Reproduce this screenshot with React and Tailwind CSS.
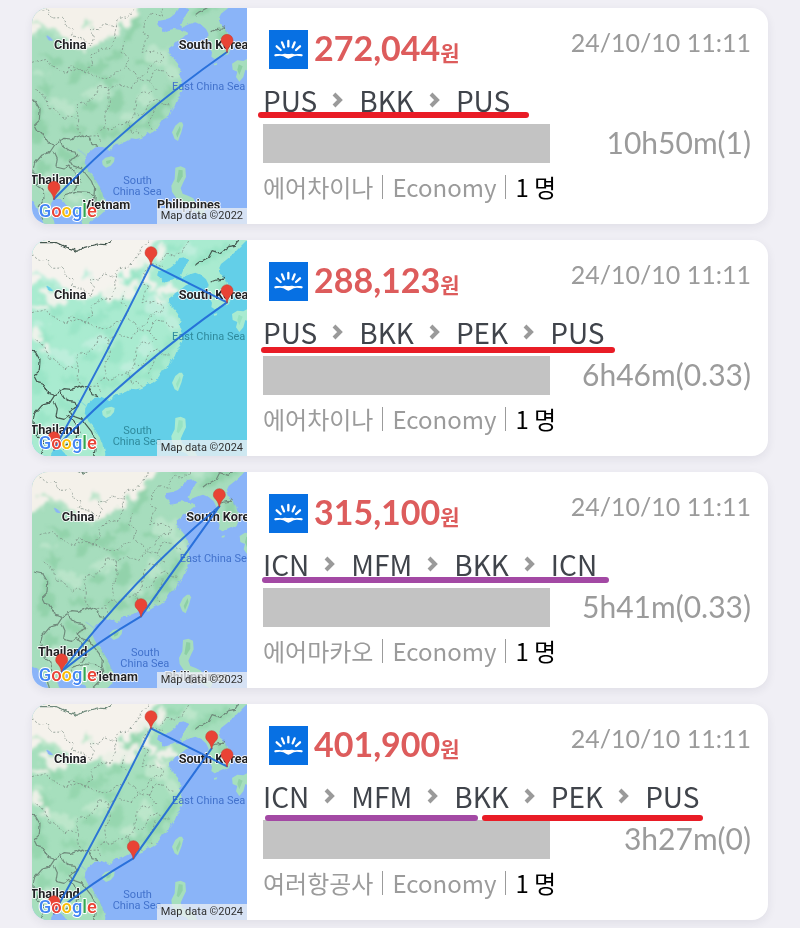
import React from 'react';

const FLIGHTS = [
  {
    price: '272,044',
    date: '24/10/10 11:11',
    route: ['PUS', 'BKK', 'PUS'],
    duration: '10h50m(1)',
    airline: '에어차이나',
    lines: ['left-[11px] top-[104px] w-[271px] bg-[#e91c26]'],
    map: { theme: 'classic', year: 2022, dx: 0, dy: -55, pins: ['BKK', 'PUS'], legs: ['BKK-PUS'], extra: true },
  },
  {
    price: '288,123',
    date: '24/10/10 11:11',
    route: ['PUS', 'BKK', 'PEK', 'PUS'],
    duration: '6h46m(0.33)',
    airline: '에어차이나',
    lines: ['left-[14px] top-[107px] w-[354px] bg-[#e91c26]'],
    map: { theme: 'bright', year: 2024, dx: 0, dy: 0, pins: ['BKK', 'PEK', 'PUS'], legs: ['BKK-PUS', 'BKK-PEK', 'PEK-PUS'] },
  },
  {
    price: '315,100',
    date: '24/10/10 11:11',
    route: ['ICN', 'MFM', 'BKK', 'ICN'],
    duration: '5h41m(0.33)',
    airline: '에어마카오',
    lines: ['left-[15px] top-[105px] w-[347px] bg-[#a349a4]'],
    map: { theme: 'classic', year: 2023, dx: 23, dy: -30, pins: ['BKK', 'MFM', 'ICN'], legs: ['BKK-ICN', 'ICN-MFM', 'MFM-BKK'], extra: true },
  },
  {
    price: '401,900',
    date: '24/10/10 11:11',
    route: ['ICN', 'MFM', 'BKK', 'PEK', 'PUS'],
    duration: '3h27m(0)',
    airline: '여러항공사',
    lines: [
      'left-[18px] top-[111px] w-[213px] bg-[#a349a4]',
      'left-[235px] top-[111px] w-[221px] bg-[#e91c26]',
    ],
    map: { theme: 'dry', year: 2024, dx: 0, dy: 0, pins: ['BKK', 'MFM', 'PEK', 'ICN', 'PUS'], legs: ['BKK-PEK', 'PEK-PUS', 'ICN-MFM', 'MFM-BKK'] },
  },
];

const THEMES = {
  classic: { sea: '#8ab4f8', land: '#a6ddbd', deep: '#86cc9f', pale: '#b9e4c9', sand: '#f4f1ea', dry: 0, label: '#4272cc', border: '#6f8a7b' },
  bright: { sea: '#63cfe8', land: '#a9ebd0', deep: '#93e2c1', pale: '#bdeedb', sand: '#f5f3ee', dry: 1, label: '#2f8a9c', border: '#45584f' },
  dry: { sea: '#8ab4f8', land: '#a6dfbd', deep: '#8dd0a6', pale: '#bce6ca', sand: '#f5f2ec', dry: 1, label: '#4272cc', border: '#6f8a7b' },
};

const AIRPORTS = {
  BKK: [66, 628],
  PUS: [585, 187],
  PEK: [357, 73],
  ICN: [539, 133],
  MFM: [304, 463],
};

const LEGS = {
  'BKK-PUS': 'M66 628Q300 386 585 187',
  'BKK-ICN': 'M66 628Q280 350 539 133',
  'BKK-PEK': 'M66 628Q215 360 357 73',
  'PEK-PUS': 'M357 73L585 187',
  'ICN-MFM': 'M539 133L304 463',
  'MFM-BKK': 'M304 463Q180 535 66 628',
};

const MAINLAND =
  'M-60 -60H760V-40L650 -5L630 15L603 42L585 58L567 72L560 88L565 104L580 118L590 138L597 158L594 182L580 196L562 203L548 208L538 201L540 188L534 178L537 160L524 146L530 134L522 118L508 106L490 98L470 104L452 112L444 106L450 92L462 76L470 62L458 52L442 54L432 70L414 84L398 90L378 94L376 104L384 116L396 128L408 122L424 118L442 120L460 124L466 132L452 144L438 152L424 166L410 176L412 192L426 208L438 222L446 240L440 252L450 268L448 284L452 300L444 318L436 326L428 346L414 366L406 384L392 394L380 414L362 428L346 434L330 444L312 448L298 446L280 456L262 462L250 462L246 474L232 484L222 476L206 470L188 474L172 488L160 504L158 522L166 540L184 560L198 584L212 606L220 640L218 664L196 684L170 700L158 716L150 690L132 668L112 660L98 640L86 628L66 628L58 640L52 662L66 690L72 740H40L34 700L22 668L8 640L-8 620L-60 600Z';

const PROVINCES = [
  'M0 45L20 60L48 62L58 85L90 84L106 110L128 118L118 138L160 150L176 172L186 140L174 118L200 120L214 100L244 112L262 86L290 80L318 48L330 20L352 0',
  'M0 218L36 206L70 236L104 250L132 236L160 246L182 222L176 196L200 180L236 176L252 140L250 100',
  'M10 300L38 318L48 350L80 368L98 388L110 376L140 392L132 348L150 336L160 346L186 320L200 290L230 296L262 284L300 296',
  'M104 250L120 224L138 236L196 262L224 268L256 248L280 232L292 204L270 188L276 150',
  'M300 296L318 268L352 276L372 300L352 312L330 304L312 330L308 372L336 376L352 336L380 326L392 344L420 346',
  'M308 372L288 398L260 404L240 420L214 414L196 434L206 454',
  'M140 392L138 424L160 440L200 438',
  'M230 296L232 340L218 372L222 410',
  'M280 232L308 250L318 268L342 250L356 224L388 214L394 198L372 184L330 188L340 152L352 140L330 130L336 98L357 71',
  'M357 71L392 80L386 58L408 40L430 48L452 30L470 0',
  'M352 276L370 240L398 244L412 260L430 262',
  'M288 398L300 430L312 420L330 440',
  'M370 350L360 380L350 396L360 420',
];

const BORDERS = [
  'M24 8L74 8L100 20L138 34L158 22L196 12L222 14L244 0',
  'M492 76L508 64L530 52L540 32L566 40L590 20L610 16L620 0',
  'M536 126L552 120L572 118L578 108',
  'M-20 330L10 336L24 360L22 392L6 408L14 424L28 428L48 460L68 466L96 446L118 448L150 436L174 446L180 464L198 470',
  'M68 466L52 490L30 496L8 522L2 548L20 560L16 590L34 600L36 630L22 650L32 690',
  'M84 450L92 470L112 482L132 484L138 500L112 512L122 528L150 538L178 574L188 598L184 628',
  'M66 484L76 506L72 532L96 538L110 526L130 548L144 574L126 600',
  'M94 628L96 616L128 606L170 608L190 618L186 650L160 676',
];

// soft relief patches: [x, y, rx, ry, rotation]
const FORESTS = [
  [132, 250, 12, 42, 24], [60, 210, 36, 13, 30], [40, 300, 18, 26, 0], [186, 236, 44, 16, -12],
  [230, 268, 30, 12, 15], [176, 352, 26, 13, -30], [250, 340, 20, 34, 20], [372, 360, 22, 40, 36],
  [410, 320, 18, 32, 20], [320, 410, 50, 12, -16], [230, 430, 42, 12, 6], [104, 500, 34, 15, 18],
  [20, 420, 22, 42, 12], [30, 540, 18, 26, 0], [180, 560, 8, 50, -38], [540, 44, 60, 15, -28],
  [430, 24, 34, 12, -20], [575, 142, 10, 30, -24], [300, 120, 12, 50, 26], [330, 216, 28, 10, 10],
  [120, 420, 36, 10, -10], [205, 610, 8, 34, -10], [20, 365, 12, 24, 0], [250, 200, 22, 11, -28],
];

const PLAINS = [
  [380, 200, 44, 30, 30], [196, 306, 46, 18, -10], [340, 320, 24, 26, 0], [90, 350, 44, 22, 20],
  [290, 380, 24, 14, 0], [60, 580, 44, 24, 0], [420, 250, 18, 22, 0], [470, 30, 26, 18, -30],
  [24, 250, 24, 12, 0], [140, 620, 34, 14, 0],
];

const DRYLAND =
  'M-60 -60H420L396 -10L362 18L334 46L322 72L296 92L268 110L250 138L226 146L204 156L178 172L160 188L132 180L104 150L74 120L44 106L20 120L-60 190Z';

const STEPPE = [
  [250, 150, 42, 26, -28], [300, 150, 16, 34, 24], [350, 120, 16, 30, -12], [404, 150, 36, 14, -6],
  [384, 178, 20, 10, 20], [60, 170, 54, 14, 26], [24, 206, 34, 10, 10], [14, 290, 16, 24, -14],
  [386, 40, 12, 26, 30], [330, 70, 30, 18, -30], [40, 324, 12, 12, 0], [446, 66, 8, 14, 30],
];

function Pin({ at }) {
  const [x, y] = AIRPORTS[at];
  return (
    <g transform={`translate(${x} ${y})`}>
      <path
        d="M0 2C-3 -8 -4 -13 -10 -20C-15 -25 -18 -29 -18 -35A18 18 0 0 1 18 -35C18 -29 15 -25 10 -20C4 -13 3 -8 0 2Z"
        fill="#e94335"
        stroke="#c5372c"
        strokeWidth="1.5"
      />
    </g>
  );
}

function RouteMap({ id, theme, year, dx, dy, pins, legs, extra }) {
  const t = THEMES[theme];
  const clip = `land-${id}`;
  const soft = `soft-${id}`;
  const ragged = `ragged-${id}`;

  return (
    <div className="relative w-[215px] shrink-0 overflow-hidden">
      <svg
        className="absolute inset-0 h-full w-full font-[Roboto,sans-serif]"
        viewBox="0 0 645 648"
        preserveAspectRatio="xMidYMid slice"
        role="img"
        aria-label={`Route map ${pins.join(', ')}`}
      >
        <defs>
          <clipPath id={clip}><path d={MAINLAND} /></clipPath>
          <filter id={soft} x="-20%" y="-20%" width="140%" height="140%">
            <feTurbulence type="fractalNoise" baseFrequency="0.04" numOctaves="3" seed="4" />
            <feDisplacementMap in="SourceGraphic" scale="46" xChannelSelector="R" yChannelSelector="G" />
            <feGaussianBlur stdDeviation="4" />
          </filter>
          <filter id={ragged} x="-10%" y="-10%" width="120%" height="120%">
            <feTurbulence type="fractalNoise" baseFrequency="0.05" numOctaves="3" seed="9" />
            <feDisplacementMap in="SourceGraphic" scale="12" xChannelSelector="R" yChannelSelector="G" />
          </filter>
        </defs>

        <rect width="645" height="648" fill={t.sea} />

        <g transform={`translate(${dx} ${dy})`}>
          {/* Land */}
          <path d={MAINLAND} fill={t.land} filter={`url(#${ragged})`} />
          <g clipPath={`url(#${clip})`}>
            <g filter={`url(#${soft})`}>
              <g fill={t.pale}>
                {PLAINS.map(([x, y, rx, ry, r], i) => (
                  <ellipse key={i} cx={x} cy={y} rx={rx} ry={ry} transform={`rotate(${r} ${x} ${y})`} />
                ))}
              </g>
              <g fill={t.deep} opacity="0.6">
                {FORESTS.map(([x, y, rx, ry, r], i) => (
                  <ellipse key={i} cx={x} cy={y} rx={rx} ry={ry} transform={`rotate(${r} ${x} ${y})`} />
                ))}
              </g>
              <path d={DRYLAND} fill={t.sand} />
              {t.dry === 1 && (
                <g fill={t.sand} opacity="0.9">
                  {STEPPE.map(([x, y, rx, ry, r], i) => (
                    <ellipse key={i} cx={x} cy={y} rx={rx} ry={ry} transform={`rotate(${r} ${x} ${y})`} />
                  ))}
                </g>
              )}
              <path d="M0 96L30 100L78 128L96 146L72 140L36 124L0 112Z" fill={t.pale} />
              <path d="M160 96L176 92L172 118L162 114Z" fill={t.pale} />
            </g>
            <path d="M44 138L54 144L62 152L50 150Z" fill={t.sea} stroke={t.sea} strokeWidth="3" />
            <path d="M138 480L150 488L164 500" fill="none" stroke={t.sea} strokeWidth="2" />
          </g>

          {/* Islands */}
          <g fill={t.land}>
            <path d="M210 514L220 504L238 500L248 504L246 516L236 528L222 534L212 526Z" />
            <path d="M450 398L454 406L448 428L438 454L428 448L420 428L430 408L442 398Z" />
            <path d="M430 534L446 530L460 536L462 562L454 578L446 596L452 612L468 618L484 626L496 648L520 660L512 680L486 664L462 640L436 630L420 606L418 588L428 568Z" />
            <path d="M600 222L616 212L634 214L660 200V250L640 240L634 262L622 276L612 262L616 246L602 240Z" />
            <path d="M546 222L556 220L554 226L546 227Z" />
          </g>
          <g fill={t.deep} opacity="0.8">
            <path d="M444 408L446 420L436 444L432 432Z" />
            <path d="M440 540L452 542L452 560L440 580L434 576Z" />
            <path d="M620 224L632 230L622 256L616 240Z" />
            <path d="M222 514L238 510L234 520L224 524Z" />
          </g>

          {/* Boundaries */}
          <g fill="none" strokeLinejoin="round" filter={`url(#${ragged})`}>
            <g stroke="#7c8c83" strokeWidth="3" strokeDasharray="6 6" opacity="0.75">
              {PROVINCES.map((d) => <path key={d} d={d} />)}
            </g>
            <g stroke={t.border} strokeWidth="3.5">
              {BORDERS.map((d) => <path key={d} d={d} />)}
            </g>
          </g>

          {/* Place names */}
          <g fontSize="33" fill={t.label}>
            <text x="420" y="300">East China Sea</text>
            <text x="274" y="583">South</text>
            <text x="242" y="615">China Sea</text>
          </g>
          <g fontSize="38" fontWeight="700" fill="#202124" stroke="#ffffff" strokeWidth="5" strokeLinejoin="round" paintOrder="stroke">
            <text x="66" y="178">China</text>
            <text x="440" y="178">South Korea</text>
            <text x="-5" y="583">Thailand</text>
            {extra && <text x="152" y="658">Vietnam</text>}
            {extra && <text x="375" y="658">Philippines</text>}
          </g>

          <g fill="none" stroke="#1f69d8" strokeWidth="6" strokeLinecap="round" opacity="0.9">
            {legs.map((leg) => <path key={leg} d={LEGS[leg]} />)}
          </g>
          {pins.map((p) => <Pin key={p} at={p} />)}
        </g>

        {/* Wordmark */}
        <text x="20" y="628" fontSize="55" fontWeight="500" stroke="#ffffff" strokeWidth="6" strokeLinejoin="round" paintOrder="stroke">
          <tspan fill="#4285f4">G</tspan>
          <tspan fill="#ea4335">o</tspan>
          <tspan fill="#fbbc05">o</tspan>
          <tspan fill="#4285f4">g</tspan>
          <tspan fill="#34a853">l</tspan>
          <tspan fill="#ea4335">e</tspan>
        </text>
      </svg>
      <div className="absolute right-0 bottom-0 bg-[#e8eef2]/80 px-1 font-[Roboto,sans-serif] text-[11px] leading-4 text-[#303030]">
        Map data ©{year}
      </div>
    </div>
  );
}

function BrandLogo() {
  return (
    <svg className="size-[39px] shrink-0" viewBox="0 0 117 117" role="img" aria-label="Skyscanner">
      <rect width="117" height="117" fill="#0770e3" />
      <g stroke="#ffffff" strokeWidth="7" strokeLinecap="round">
        <path d="M58 33V49" />
        <path d="M39 37L45 52" />
        <path d="M77 37L71 52" />
        <path d="M23 49L35 60" />
        <path d="M93 49L81 60" />
      </g>
      <path
        d="M18 73C28 71 34 74 43 72C50 70 54 72 58 72S66 70 73 72C82 74 89 71 99 73C103 75 101 80 97 79C87 77 80 77 74 79C67 82 64 86 58 86S50 82 43 79C37 77 30 77 20 79C16 80 14 75 18 73Z"
        fill="#ffffff"
      />
    </svg>
  );
}

function Chevron() {
  return (
    <svg className="h-4 w-3 shrink-0" viewBox="0 0 12 16" fill="none" stroke="#9a9a9a" strokeWidth="4" aria-hidden="true">
      <path d="M2 2L8 8L2 14" />
    </svg>
  );
}

function FlightCard({ id, flight }) {
  return (
    <article className="flex overflow-hidden rounded-2xl bg-white shadow-[0_3px_10px_rgba(40,40,70,0.08)]">
      <RouteMap id={id} {...flight.map} />
      <div className="relative min-w-0 flex-1 pt-[22px] pr-[17px] pb-[21px] pl-4">
        <div className="flex h-[39px] items-start">
          <div className="ml-1.5"><BrandLogo /></div>
          <p className="ml-1.5 flex items-baseline leading-9 font-bold text-[#dd5c5c]">
            <span className="font-[Lato,sans-serif] text-[34px]">{flight.price}</span>
            <span className="font-['Noto_Sans_CJK_KR',sans-serif] text-[21px] leading-6">원</span>
          </p>
          <time className="ml-auto font-[Lato,sans-serif] text-[25px] leading-6 text-[#9b9b9b]">{flight.date}</time>
        </div>

        <div className="mt-[11px] flex items-center gap-[15px] font-['Noto_Sans_CJK_KR',sans-serif] text-[28px] leading-10 text-[#40444b]">
          {flight.route.map((code, i) => (
            <React.Fragment key={i}>
              {i > 0 && <Chevron />}
              <span>{code}</span>
            </React.Fragment>
          ))}
        </div>
        {flight.lines.map((line) => (
          <span key={line} className={`absolute h-1.5 rounded-full ${line}`} />
        ))}

        <div className="mt-1 flex items-start justify-between">
          <div className="h-[39px] w-[287px] bg-[#c3c3c3]" />
          <span className="font-[Lato,sans-serif] text-[30px] leading-9 text-[#9b9b9b]">{flight.duration}</span>
        </div>

        <p className="mt-2 flex items-center gap-[9px] font-['Noto_Sans_CJK_KR',sans-serif] text-2xl leading-8 text-[#9b9b9b]">
          <span>{flight.airline}</span>
          <span className="h-6 w-px bg-[#9b9b9b]" />
          <span>Economy</span>
          <span className="h-6 w-px bg-[#9b9b9b]" />
          <span className="text-black">1 명</span>
        </p>
      </div>
    </article>
  );
}

export default function App() {
  return (
    <main className="flex min-h-screen flex-col gap-4 bg-[#f0eff5] px-8 py-2">
      {FLIGHTS.map((flight, i) => (
        <FlightCard key={flight.price} id={i} flight={flight} />
      ))}
    </main>
  );
}
